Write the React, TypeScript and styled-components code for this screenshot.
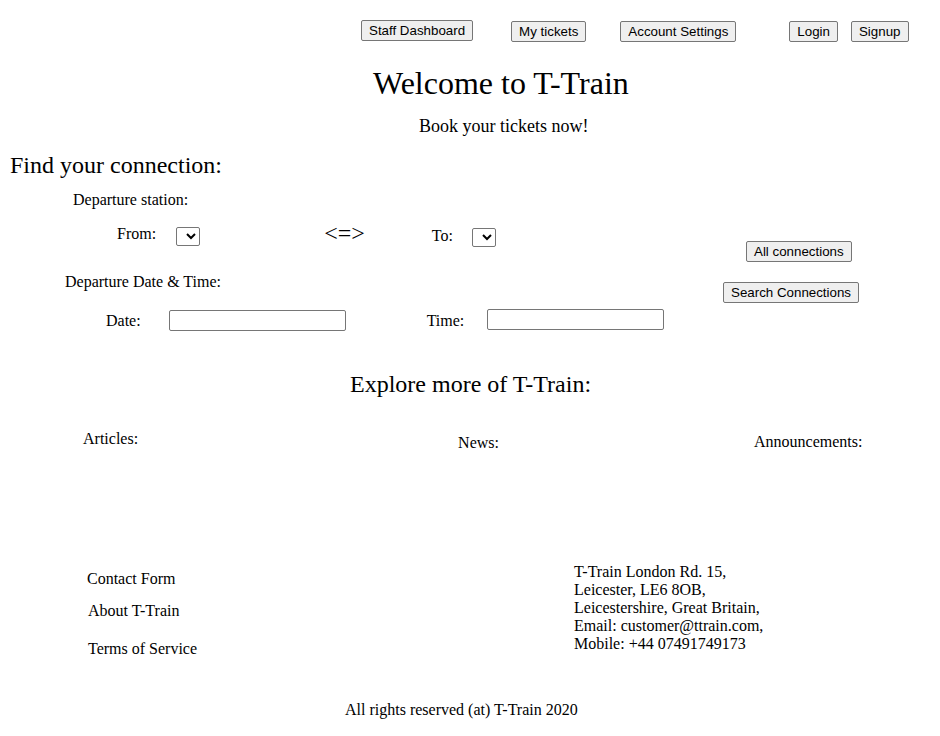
import React from "react";
import styled, { createGlobalStyle } from "styled-components";

const Global = createGlobalStyle`
  html, body { margin: 0; padding: 0; background: #fff; }
  body { font-family: "Liberation Serif", "Times New Roman", serif; color: #000; }
`;

const Page = styled.div`
  width: 940px;
  height: 736px;
  position: relative;
  overflow: hidden;
`;

const Nav = styled.nav`
  display: flex;
  align-items: flex-start;
  padding: 20px 0 0 361px;
  height: 22px;
`;

const Btn = styled.button<{ $ml?: number; $mt?: number }>`
  font-family: "Liberation Sans", Arial, sans-serif;
  font-size: 13.33px;
  height: 21px;
  padding: 0 7px;
  margin: ${(p) => p.$mt ?? 0}px 0 0 ${(p) => p.$ml ?? 0}px;
  background: #efefef;
  border: 1px solid #767676;
  border-radius: 2px;
  color: #000;
  line-height: 19px;
  white-space: nowrap;
`;

const Title = styled.h1`
  margin: 23px 0 0 373px;
  font-size: 32px;
  font-weight: normal;
  line-height: 37px;
`;

const Sub = styled.p`
  margin: 14px 0 0 419px;
  font-size: 18px;
  line-height: 20px;
`;

const SectionTitle = styled.h2<{ $ml: number; $mt: number }>`
  margin: ${(p) => p.$mt}px 0 0 ${(p) => p.$ml}px;
  font-size: 24px;
  font-weight: normal;
  line-height: 28px;
`;

const Form = styled.div`
  display: flex;
`;

const FormLeft = styled.div`
  width: 700px;
`;

const FormRight = styled.div`
  display: flex;
  flex-direction: column;
  align-items: flex-start;
`;

const Label = styled.div<{ $ml: number; $mt: number }>`
  margin: ${(p) => p.$mt}px 0 0 ${(p) => p.$ml}px;
  font-size: 16px;
  line-height: 18px;
  white-space: nowrap;
`;

const Row = styled.div<{ $mt: number }>`
  display: flex;
  align-items: flex-start;
  margin-top: ${(p) => p.$mt}px;
`;

const Inline = styled.span<{ $ml: number; $mt?: number; $size?: number }>`
  margin: ${(p) => p.$mt ?? 0}px 0 0 ${(p) => p.$ml}px;
  font-size: ${(p) => p.$size ?? 16}px;
  line-height: 18px;
  white-space: nowrap;
`;

const Select = styled.select<{ $ml: number; $mt?: number }>`
  width: 24px;
  height: 19px;
  margin: ${(p) => p.$mt ?? 0}px 0 0 ${(p) => p.$ml}px;
  border: 1px solid #767676;
  border-radius: 2px;
  background: #fff;
  padding: 0;
  font-size: 13px;
`;

const TextInput = styled.input<{ $ml: number; $mt?: number }>`
  box-sizing: border-box;
  width: 177px;
  height: 21px;
  margin: ${(p) => p.$mt ?? 0}px 0 0 ${(p) => p.$ml}px;
  border: 1px solid #767676;
  border-radius: 2px;
  padding: 1px 2px;
`;

const Explore = styled.div`
  display: flex;
  align-items: flex-start;
  margin-top: 32px;
  height: 40px;
`;

const Footer = styled.footer`
  display: flex;
  margin-top: 100px;
`;

const FooterLinks = styled.div`
  width: 574px;
`;

const Address = styled.address`
  font-style: normal;
  font-size: 16px;
  line-height: 18px;
  margin-top: -7px;
`;

const Copy = styled.div`
  margin: 43px 0 0 345px;
  font-size: 16px;
  line-height: 18px;
`;

export default function App() {
  return (
    <Page>
      <Global />
      <Nav>
        <Btn>Staff Dashboard</Btn>
        <Btn $ml={38} $mt={1}>My tickets</Btn>
        <Btn $ml={34} $mt={1}>Account Settings</Btn>
        <Btn $ml={53} $mt={1}>Login</Btn>
        <Btn $ml={13} $mt={1}>Signup</Btn>
      </Nav>
      <Title>Welcome to T-Train</Title>
      <Sub>Book your tickets now!</Sub>
      <SectionTitle $ml={10} $mt={15}>Find your connection:</SectionTitle>
      <Form>
        <FormLeft>
          <Label $ml={73} $mt={12}>Departure station:</Label>
          <Row $mt={18}>
            <Inline $ml={117} $mt={-2}>From:</Inline>
            <Select $ml={20} />
            <Inline $ml={124} $mt={-3} $size={24}>&lt;=&gt;</Inline>
            <Inline $ml={67} $mt={0}>To:</Inline>
            <Select $ml={19} $mt={1} />
          </Row>
          <Label $ml={65} $mt={26}>Departure Date &amp; Time:</Label>
          <Row $mt={19}>
            <Inline $ml={106} $mt={2}>Date:</Inline>
            <TextInput $ml={28} />
            <Inline $ml={81} $mt={2}>Time:</Inline>
            <TextInput $ml={23} $mt={-1} />
          </Row>
        </FormLeft>
        <FormRight>
          <Btn $ml={46} $mt={62}>All connections</Btn>
          <Btn $ml={23} $mt={20}>Search Connections</Btn>
        </FormRight>
      </Form>
      <SectionTitle $ml={350} $mt={39}>Explore more of T-Train:</SectionTitle>
      <Explore>
        <Inline $ml={83}>Articles:</Inline>
        <Inline $ml={320} $mt={4}>News:</Inline>
        <Inline $ml={255} $mt={3}>Announcements:</Inline>
      </Explore>
      <Footer>
        <FooterLinks>
          <Label $ml={87} $mt={0}>Contact Form</Label>
          <Label $ml={88} $mt={14}>About T-Train</Label>
          <Label $ml={88} $mt={20}>Terms of Service</Label>
        </FooterLinks>
        <Address>
          T-Train London Rd. 15,<br />
          Leicester, LE6 8OB,<br />
          Leicestershire, Great Britain,<br />
          Email: customer@ttrain.com,<br />
          Mobile: +44 07491749173
        </Address>
      </Footer>
      <Copy>All rights reserved (at) T-Train 2020</Copy>
    </Page>
  );
}
